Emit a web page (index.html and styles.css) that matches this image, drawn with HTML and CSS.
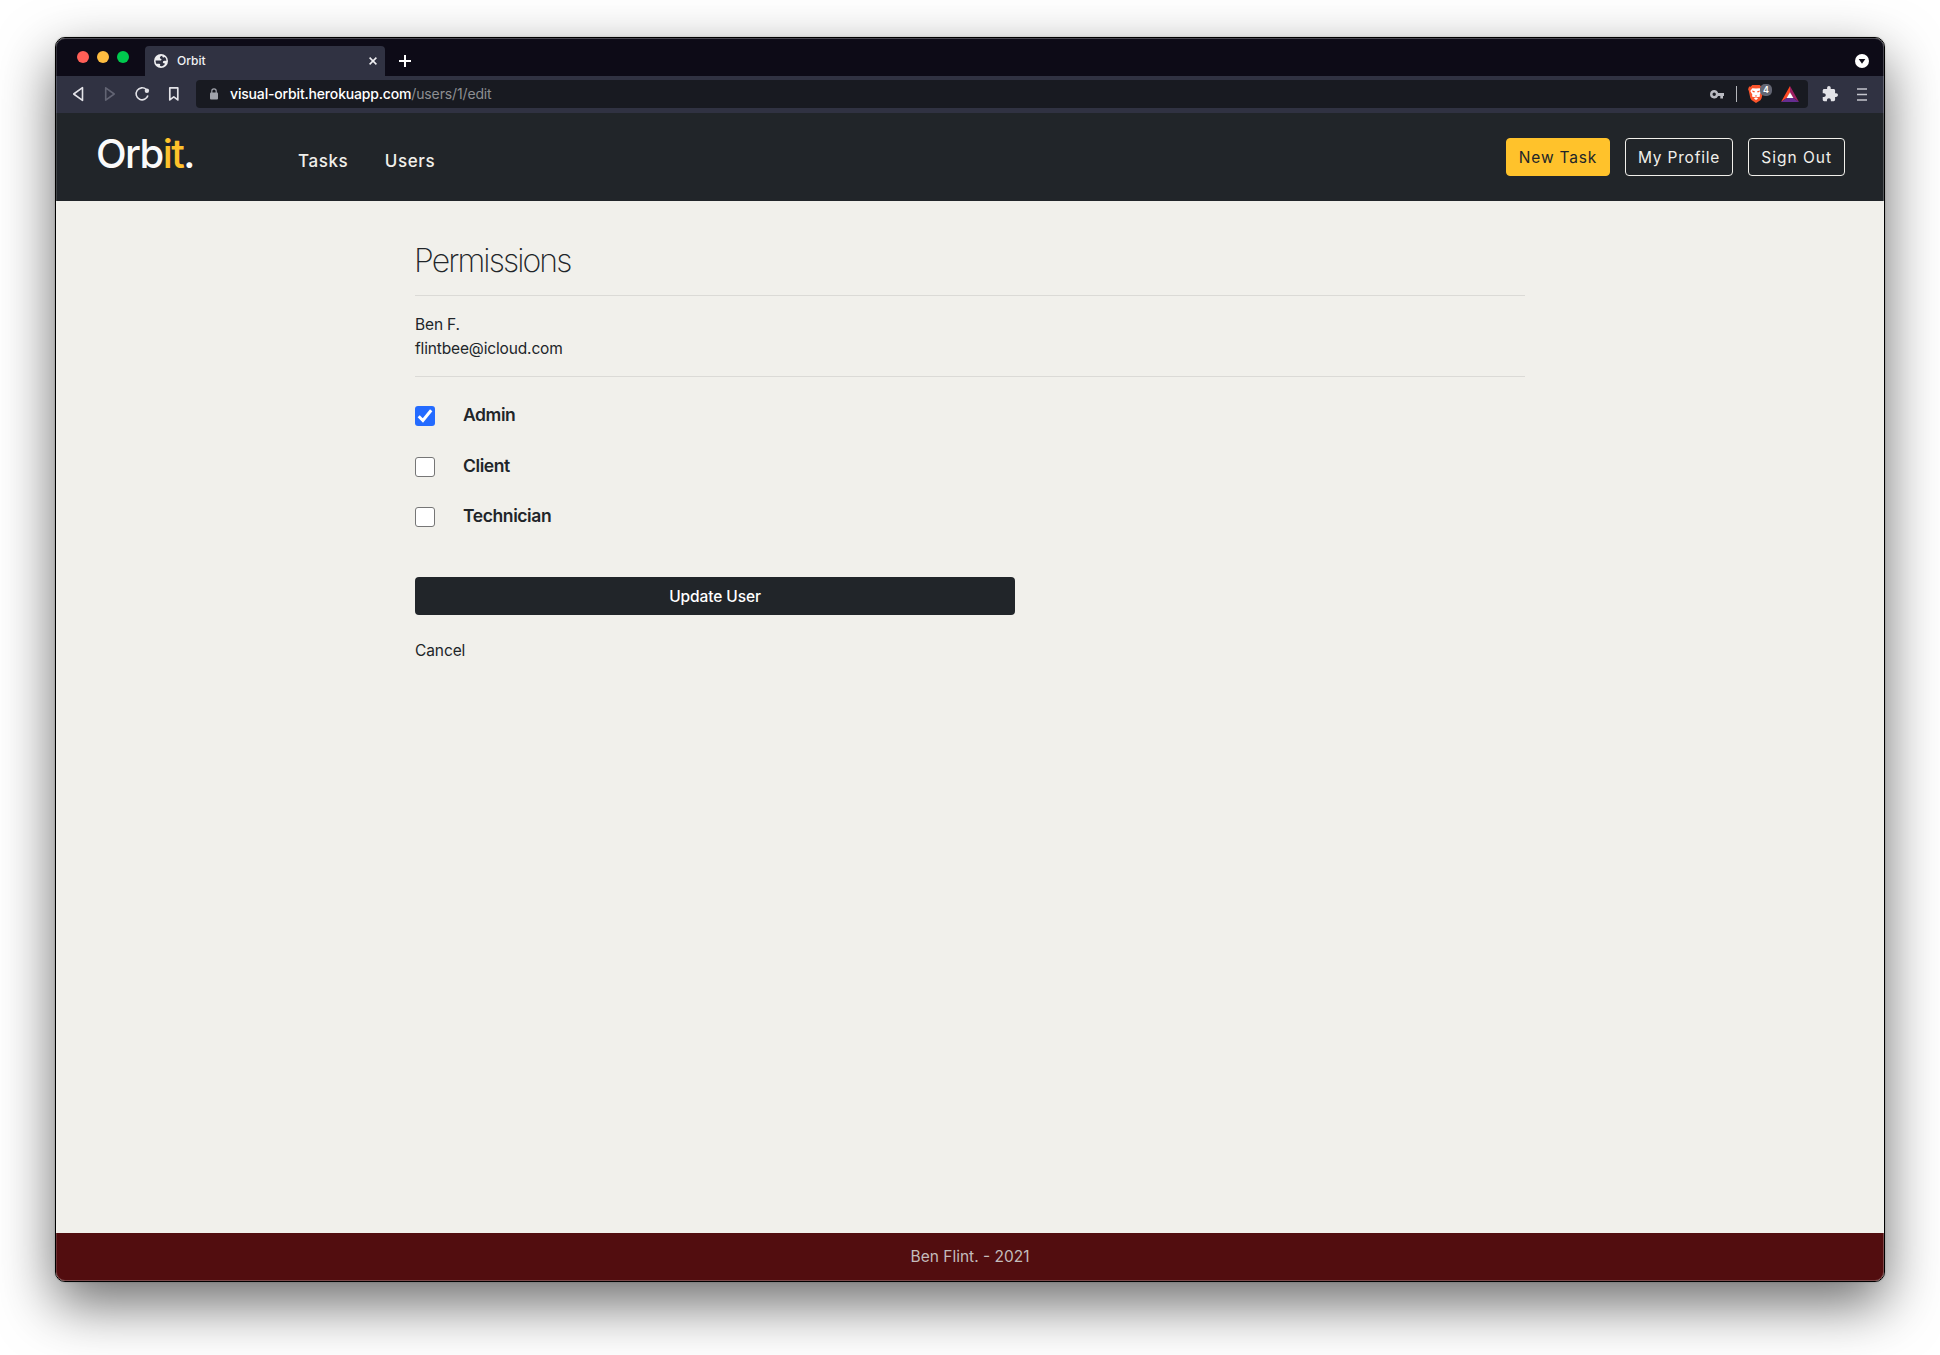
FILE: index.html
```html
<!DOCTYPE html>
<html lang="en">
<head>
<meta charset="utf-8">
<title>Orbit</title>
<link rel="stylesheet" href="styles.css">
</head>
<body>
<div class="window">
  <div class="tabstrip">
    <div class="lights"><i class="light red"></i><i class="light yellow"></i><i class="light green"></i></div>
    <div class="tab">
      <svg class="globe" width="14" height="14" viewBox="0 0 14 14"><circle cx="7" cy="7" r="7" fill="#eeeef0"/><path d="M8.200 1.700C6.900 2 5.600 2.800 5.900 3.900c.2.800 1.500.7 1.600 1.500.1.900-.9 1.200-1.900 1.200H1.600c-.1 1.300.3 2.500 1 3.400.9-.2 2.300-.4 3.200.1.700.5.600 1.200 0 1.700.8.500 1.900.5 2.700.2 1.300-.4 2.200-1.400 2.600-2.400-.9 0-1.900-.2-2.200-1-.3-.9.500-1.700 1.500-1.800l2-.1c-.1-1.500-.7-2.700-1.600-3.600-.4.500-1.200.7-1.800.3-.6-.4-.7-1-.8-1.700Z" fill="#303242"/></svg>
      <span class="tab-title">Orbit</span>
      <svg class="tab-close" width="8" height="8" viewBox="0 0 8 8"><path d="M.6.6l6.800 6.800M7.400.6L.6 7.400" stroke="#f0f0f3" stroke-width="1.500"/></svg>
    </div>
    <svg class="new-tab" width="12" height="12" viewBox="0 0 12 12"><path d="M6 0v12M0 6h12" stroke="#fff" stroke-width="2"/></svg>
    <svg class="tab-search" width="14" height="14" viewBox="0 0 14 14"><circle cx="7" cy="7" r="7" fill="#fff"/><path d="M3.700 5h6.600L7 9.700Z" fill="#0d0b17"/></svg>
  </div>
  <div class="toolbar">
    <svg class="nav-icons" width="108" height="16" viewBox="0 0 108 16" fill="none" stroke="#e3e3e8" stroke-width="1.600" stroke-linejoin="round">
      <path d="M10.500 1.600v12.800L1.700 8Z"/>
      <path d="M33.700 1.800v12.400L42.200 8Z" stroke="#626473"/>
      <path d="M74.300 3.500A6 6 0 1 0 75.900 9.500" stroke-width="1.600"/><circle cx="74.900" cy="4.700" r="2.200" fill="#e3e3e8" stroke="none"/>
      <path d="M97.800 1.900h8v12l-4-3-4 3Z" stroke-width="1.700"/>
    </svg>
    <div class="address">
      <svg class="lock" width="8" height="12" viewBox="0 0 8 12"><rect y="4.500" width="8" height="7" rx="1" fill="#a0a3ab"/><path d="M1.800 5V3a2.200 2.200 0 0 1 4.400 0v2" fill="none" stroke="#a0a3ab" stroke-width="1.200"/></svg>
      <span class="url"><span class="host">visual-orbit.herokuapp.com</span>/users/1/edit</span>
      <svg class="key" width="14" height="9" viewBox="0 0 14 9"><path fill-rule="evenodd" d="M4.200 0a4.200 4.200 0 0 1 3.900 2.900H14v3h-1V8.600h-2.700V5.900H8.100A4.200 4.200 0 1 1 4.200 0Zm0 2.600a1.700 1.700 0 1 0 0 3.400 1.700 1.700 0 0 0 0-3.400Z" fill="#b9bac1"/></svg>
      <i class="divider"></i>
      <div class="shield">
        <svg width="16" height="18" viewBox="0 0 16 18"><path d="M4.300 0h7.400l1.600 1.700 1.500-.1 1 2.700-.7 1.900-1.500 7-1.200 2L8 18l-4.500-2.900-1.200-2-1.500-7L.1 4.200l1-2.600 1.500.1Z" fill="#fb542b"/><path d="M4.300 3.200L8 3.600l3.700-.4 2 2.700-2 3.600.3 2-2.500.8L8 11.200l-1.500 1.100-2.500-.8.3-2-2-3.600Z" fill="#fff"/><path d="M8 12.300l2.100 1.200L8 15.100l-2.100-1.600Z" fill="#fff"/><path d="M4.200 5.600l2.700.7-.5 1.200-1.800-.4ZM11.800 5.600l-2.700.7.5 1.200 1.800-.4ZM6.400 9.700L8 10.400l1.600-.7L8 11.300Z" fill="#fb542b"/></svg>
        <span class="badge">4</span>
      </div>
      <svg class="bat" width="18" height="16" viewBox="0 0 18 16"><path d="M9 0L0 16l6-4.200L9 6.500Z" fill="#ff4724"/><path d="M9 0l9 16-6-4.200L9 6.500Z" fill="#9e1f63"/><path d="M0 16h18l-6-4.200H6Z" fill="#662d91"/><path d="M9 6.200l3.400 5.900H5.600Z" fill="#fff"/></svg>
    </div>
    <svg class="puzzle" width="16" height="16" viewBox="1 1 22 22"><path d="M20.500 11H19V7c0-1.100-.9-2-2-2h-4V3.500a2.500 2.500 0 0 0-5 0V5H4c-1.100 0-2 .9-2 2v3.800h1.500c1.500 0 2.700 1.200 2.700 2.700S5 16.200 3.500 16.200H2V20c0 1.100.9 2 2 2h3.800v-1.500c0-1.500 1.200-2.700 2.700-2.700s2.700 1.200 2.700 2.700V22H17c1.100 0 2-.9 2-2v-4h1.500a2.500 2.500 0 0 0 0-5Z" fill="#e3e3e8"/></svg>
    <svg class="menu" width="10" height="13" viewBox="0 0 10 13"><path d="M0 1h10M0 6.500h10M0 12h10" stroke="#c4c5cd" stroke-width="1.600"/></svg>
  </div>
  <header class="site-header">
    <a class="logo">Orb<span class="accent">it</span>.</a>
    <nav class="nav"><a>Tasks</a><a>Users</a></nav>
    <div class="actions"><a class="btn primary">New Task</a><a class="btn">My Profile</a><a class="btn sign-out">Sign Out</a></div>
  </header>
  <main class="content">
    <h1>Permissions</h1>
    <div class="user">Ben F.<br>flintbee@icloud.com</div>
    <form class="permissions">
      <label class="option"><span class="box checked"><svg width="20" height="20" viewBox="0 0 20 20"><path d="M3.700 10.300l4.200 4.200L16.200 4.300" fill="none" stroke="#fff" stroke-width="3"/></svg></span><span class="role">Admin</span></label>
      <label class="option"><span class="box"></span><span class="role">Client</span></label>
      <label class="option"><span class="box"></span><span class="role">Technician</span></label>
      <button class="submit" type="button">Update User</button>
      <a class="cancel">Cancel</a>
    </form>
  </main>
  <footer class="footer">Ben Flint. - 2021</footer>
</div>
</body>
</html>
```
FILE: styles.css
```css
* { box-sizing: border-box; }
body { margin: 0; height: 1355px; display: flow-root; overflow: hidden; background: #fff; color: #212529; font: 420 15.5px/24px Inter, "Liberation Sans", sans-serif; }
svg { display: block; flex: none; }
.window { width: 1830px; height: 1245px; margin: 37px 0 0 55px; border: 1px solid #000; border-radius: 10px; background: #f1f0eb; display: flex; flex-direction: column; position: relative; overflow: hidden; box-shadow: 0 22px 56px rgba(0,0,0,.58), 0 0 2px rgba(0,0,0,.25); }
.window::after { content: ""; position: absolute; inset: 0; border: 1px solid rgba(255,255,255,.25); border-left-color: rgba(255,255,255,.15); border-radius: 9px; pointer-events: none; }

/* Browser chrome */
.tabstrip { height: 38px; background: #0d0b17; display: flex; align-items: flex-end; flex: none; }
.lights { display: flex; gap: 8px; margin: 0 16px 13px 21px; }
.light { width: 12px; height: 12px; border-radius: 50%; }
.red { background: #ff5f57; }
.yellow { background: #febc40; }
.green { background: #00ca4e; }
.tab { width: 240px; height: 30px; background: #303242; border-radius: 4px 4px 0 0; display: flex; align-items: center; padding: 0 8px 0 9px; color: #f1f1f4; font-size: 12px; font-weight: 500; }
.tab-title { margin-left: 9px; flex: 1; }
.new-tab { margin: 0 0 9px 14px; }
.tab-search { margin: 0 15px 8px auto; }
.toolbar { height: 37px; background: #303242; display: flex; align-items: center; flex: none; padding-bottom: 1px; }
.nav-icons { margin-left: 16px; }
.address { width: 1612px; height: 28px; margin-left: 16px; border-radius: 4px; background: #181a21; display: flex; align-items: center; padding: 0 9px 0 14px; }
.url { margin: 0 auto 0 12px; font-size: 14px; color: #8d8e92; letter-spacing: -.14px; }
.host { color: #fff; font-weight: 500; letter-spacing: -.17px; }
.divider { width: 1px; height: 16px; background: #b5b6bb; margin: 0 11px 0 12px; }
.shield { position: relative; width: 16px; margin-right: 17px; }
.badge { position: absolute; left: 12px; top: -1px; width: 12px; height: 12px; border-radius: 5px; background: #636673; color: #fff; font-size: 9px; line-height: 12px; font-weight: 600; text-align: center; }
.puzzle { margin-left: 14px; }
.menu { margin-left: 19px; }

/* Site header */
.site-header { height: 88px; background: #212529; display: flex; align-items: center; flex: none; padding: 0 39px 0 40px; color: #f1f0eb; }
.logo { width: 100px; margin-bottom: 6px; font-size: 40px; line-height: 48px; font-weight: 520; color: #fafafa; letter-spacing: -1.600px; }
.accent { color: #ffc22b; }
.nav { display: flex; gap: 36.500px; margin-left: 102px; padding-top: 7px; font-size: 17px; font-weight: 450; letter-spacing: .6px; }
.actions { display: flex; gap: 15px; margin-left: auto; letter-spacing: .8px; }
.btn { border: 1px solid #f1f0eb; border-radius: 4px; height: 38px; line-height: 36px; padding: 1px 12px 0; }
.primary { background: #ffc22b; border-color: #ffc22b; color: #212529; }
.sign-out { letter-spacing: 1px; }

/* Permissions form */
.content { flex: 1; width: 1110px; margin-left: 359px; }
h1 { margin: 0; padding-top: 41px; height: 95px; font-size: 32px; line-height: 38px; font-weight: 230; border-bottom: 1px solid #dbdad6; letter-spacing: -1.900px; text-indent: -1px; }
.user { padding-top: 17px; height: 81px; border-bottom: 1px solid #dbdad6; letter-spacing: -.15px; }
.permissions { padding-top: 24px; display: flex; flex-direction: column; letter-spacing: -.1px; }
.option { display: flex; height: 24px; margin-bottom: 26.500px; gap: 28px; font-size: 17.500px; font-weight: 600; letter-spacing: -.4px; }
.role { padding-top: 2px; }
.box { width: 20px; height: 20px; margin-top: 5px; border: 1px solid #767676; border-radius: 3px; background: #fff; }
.checked { border: 0; background: #246bff; }
.submit { width: 600px; height: 38px; padding: 1px 0 0; border: 0; border-radius: 4px; background: #212529; color: #fff; font: inherit; font-weight: 450; letter-spacing: inherit; margin-top: 24.500px; }
.cancel { margin-top: 24px; }
.footer { height: 48px; background: #520d0f; color: #c4bcbc; display: flex; align-items: center; justify-content: center; flex: none; }
```
